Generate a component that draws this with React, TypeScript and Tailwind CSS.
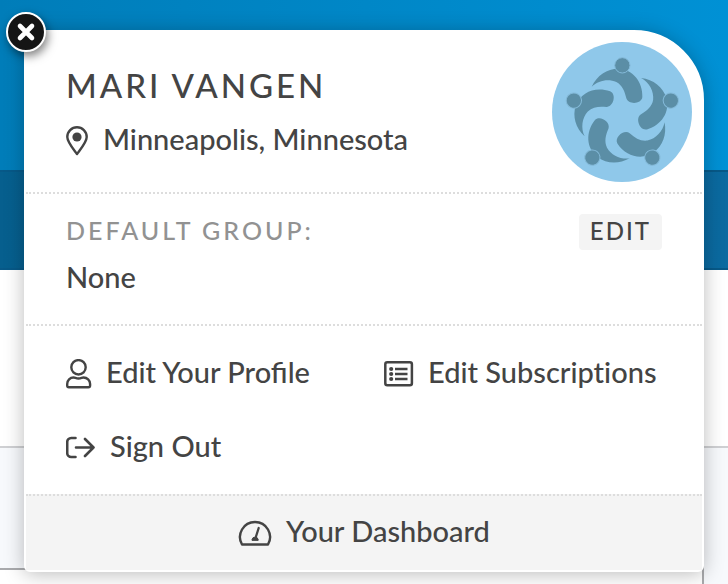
import type { ReactNode } from "react";

const BLADES = [0, 72, 144, 216, 288];

function Avatar() {
  return (
    <svg viewBox="0 0 420 420" className="block size-[140px] rounded-full bg-[#8fc8ea]" role="img" aria-label="Profile picture">
      <g transform="translate(211 223)" fill="#5b8ea6">
        {BLADES.map((angle) => (
          <g key={angle} transform={`rotate(${angle})`}>
            <path d="M-92-89C-76-123-46-143-12-143C32-141 62-103 60-58C58-36 18-34 12-54C7-76 0-93-18-103C-42-114-72-108-92-89Z" />
            <circle cx="0" cy="-153" r="23" stroke="#84bad9" strokeWidth="3" />
          </g>
        ))}
      </g>
    </svg>
  );
}

function PinIcon() {
  return (
    <svg viewBox="0 0 22 30" className="h-[30px] w-[22px] shrink-0" fill="none" aria-hidden="true">
      <path d="M11 28C9 25 1.300 16.500 1.300 11a9.700 9.700 0 0 1 19.400 0C20.700 16.500 13 25 11 28Z" stroke="currentColor" strokeWidth="2.400" strokeLinejoin="round" />
      <circle cx="11" cy="11" r="4.600" fill="currentColor" />
    </svg>
  );
}

function UserIcon() {
  return (
    <svg viewBox="0 0 26 30" className="h-[30px] w-[26px] shrink-0" fill="none" stroke="currentColor" strokeWidth="2.400" strokeLinejoin="round" aria-hidden="true">
      <circle cx="12.500" cy="8.300" r="7.200" />
      <path d="M7.500 18.500c1.700 0 2.400 1 5 1s3.300-1 5-1c3.600 0 6.600 2.800 6.600 6.400v1.600c0 1-.8 1.800-1.800 1.800H2.900c-1 0-1.700-.8-1.700-1.800v-1.600c0-3.600 2.900-6.400 6.300-6.400Z" />
    </svg>
  );
}

function ListIcon() {
  return (
    <svg viewBox="0 0 30 26" className="h-[26px] w-[30px] shrink-0" fill="none" stroke="currentColor" aria-hidden="true">
      <rect x="1.300" y="1.300" width="26.600" height="23" rx="2" strokeWidth="2.500" />
      <path d="M11 8h12.500M11 13h12.500M11 18h12.500" strokeWidth="2.400" />
      <path d="M7.200 8h.01M7.200 13h.01M7.200 18h.01" strokeWidth="4.200" strokeLinecap="round" />
    </svg>
  );
}

function SignOutIcon() {
  return (
    <svg viewBox="0 0 30 24" className="h-6 w-[30px] shrink-0" fill="none" stroke="currentColor" strokeWidth="2.600" strokeLinecap="round" strokeLinejoin="round" aria-hidden="true">
      <path d="M9.500 2H5.200a4 4 0 0 0-4 4v11a4 4 0 0 0 4 4h4.300M10 11.500h17.500M19 3l8.500 8.500L19 20" />
    </svg>
  );
}

function GaugeIcon() {
  return (
    <svg viewBox="0 0 34 28" className="h-7 w-[34px] shrink-0" fill="none" stroke="currentColor" strokeLinejoin="round" strokeLinecap="round" aria-hidden="true">
      <path d="M4 25.500A15 15 0 1 1 30 25.500Z" strokeWidth="2.400" />
      <path d="M20.700 9 18 17.500" strokeWidth="2.300" />
      <path d="M14 21v-.5a3.200 3.200 0 0 1 6.200 0v.5Z" fill="currentColor" strokeWidth="1" />
    </svg>
  );
}

function MenuLink({ icon, children }: { icon: ReactNode; children: ReactNode }) {
  return (
    <a href="#" className="flex h-[42px] items-center gap-[14px] whitespace-nowrap">
      {icon}
      <span className="pb-1">{children}</span>
    </a>
  );
}

function PageBackdrop() {
  return (
    <div className="col-start-1 row-start-1 flex flex-col bg-white" aria-hidden="true">
      <div className="h-[170px] bg-linear-to-r from-[#007db9] to-[#0091d5]" />
      <div className="h-[100px] border-y-2 border-[#075988] bg-linear-to-r from-[#065f8e] to-[#0b6aa0]" />
      <div className="h-44" />
      <div className="flex grow border-t-2 border-[#cfd0d3] bg-[#f7f9fc]">
        <div className="flex grow flex-col border-r-2 border-[#a9aaad]">
          <div className="h-[122px] border-b-2 border-[#a9aaad]" />
          <div className="grow bg-white" />
        </div>
        <div className="w-6" />
      </div>
    </div>
  );
}

export default function App() {
  return (
    <div className="grid min-h-screen overflow-hidden font-['Lato',sans-serif] text-[29px] leading-[42px] font-medium text-[#444]">
      <PageBackdrop />
      <main className="relative col-start-1 row-start-1 mx-6 mt-[30px] mb-3 self-start rounded-md rounded-tr-[70px] border-2 border-white bg-white shadow-[0_2px_20px_rgba(0,0,0,0.27)]">
        <button type="button" aria-label="Close" className="absolute -top-5 -left-5 flex size-10 items-center justify-center rounded-full border-2 border-white bg-[#151515] text-white shadow-[2px_4px_10px_rgba(0,0,0,0.5)]">
          <svg viewBox="0 0 20 20" className="size-5" stroke="currentColor" strokeWidth="4.600" strokeLinecap="round" aria-hidden="true">
            <path d="m4 4 12 12M16 4 4 16" />
          </svg>
        </button>
        <header className="flex h-[162px] items-start justify-between border-b-2 border-dotted border-[#ddd] pt-[10px] pr-[10px] pl-10">
          <div className="pt-[22px]">
            <h1 className="text-[33px] leading-[42px] tracking-[3px]">MARI VANGEN</h1>
            <p className="mt-3 flex items-center gap-[15px]">
              <PinIcon />
              <span className="pb-1">Minneapolis, Minnesota</span>
            </p>
          </div>
          <Avatar />
        </header>
        <section className="border-b-2 border-dotted border-[#ddd] px-10 pt-5 pb-[26px]">
          <div className="flex h-9 items-start justify-between">
            <h2 className="text-[25px] leading-8 tracking-[3px] text-[#929292]">DEFAULT GROUP:</h2>
            <button type="button" className="h-9 rounded bg-[#f4f4f4] px-[11px] pb-[2px] text-[24px] leading-8 tracking-[2px]">EDIT</button>
          </div>
          <p className="mt-[6px]">None</p>
        </section>
        <nav className="grid grid-cols-[318px_1fr] gap-y-8 px-10 pt-[27px] pb-[25px]">
          <MenuLink icon={<UserIcon />}>Edit Your Profile</MenuLink>
          <MenuLink icon={<ListIcon />}>
            <span className="[font-variant-ligatures:no-common-ligatures]">Edit Subscriptions</span>
          </MenuLink>
          <MenuLink icon={<SignOutIcon />}>Sign Out</MenuLink>
        </nav>
        <a href="#" className="flex h-[76px] items-center justify-center gap-[14px] border-t-2 border-dotted border-[#ddd] bg-[#f4f4f4]">
          <GaugeIcon />
          <span className="pb-1">Your Dashboard</span>
        </a>
      </main>
    </div>
  );
}
